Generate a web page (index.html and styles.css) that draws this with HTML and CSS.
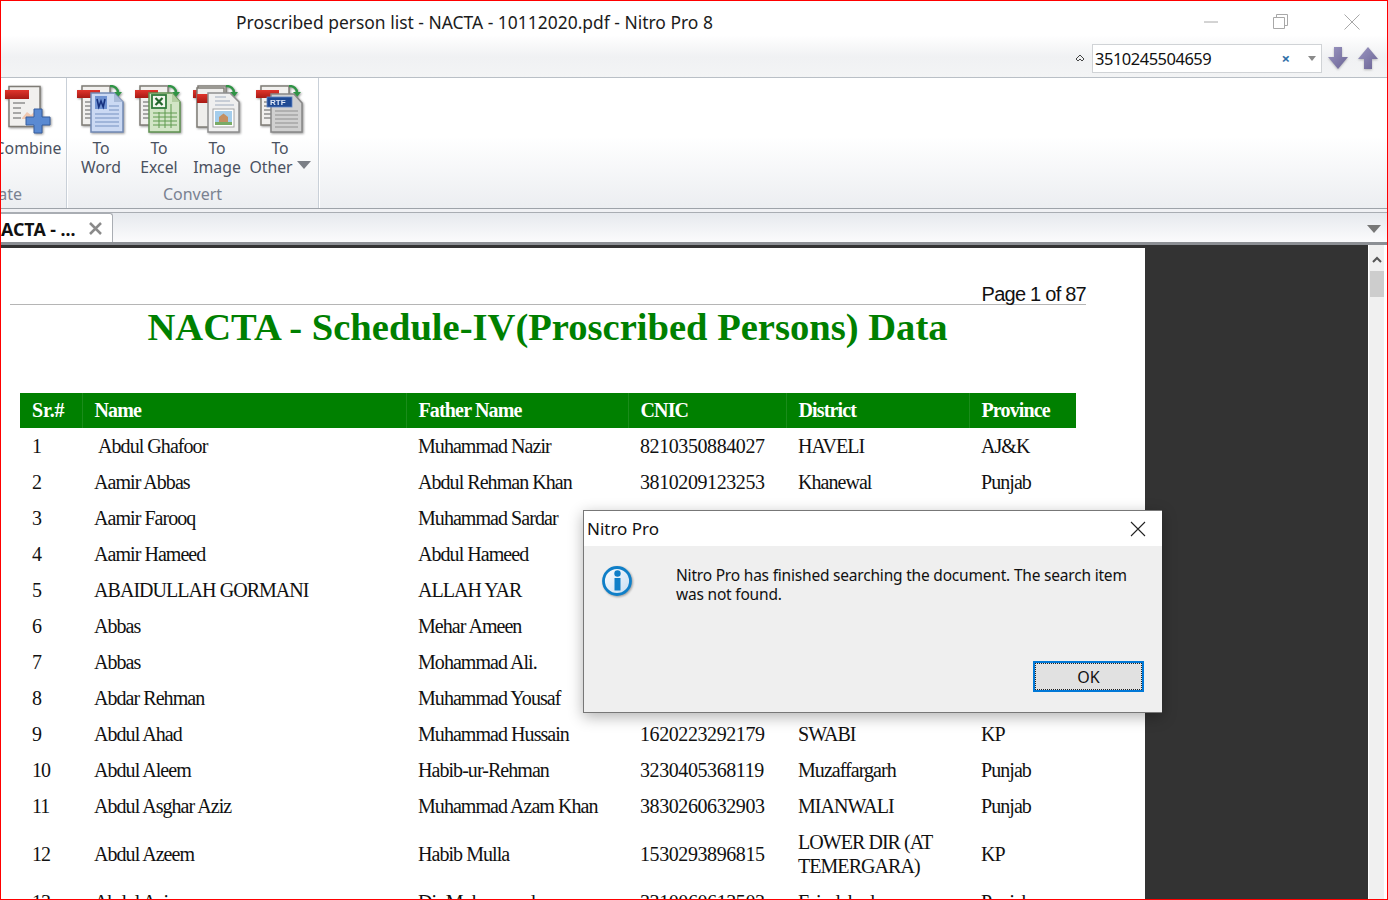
FILE: index.html
```html
<!DOCTYPE html>
<html lang="en">
<head>
    <meta charset="UTF-8">
    <meta name="viewport" content="width=device-width, initial-scale=1.0">
    <title>Proscribed person list - NACTA - 10112020.pdf - Nitro Pro 8</title>
    <link rel="stylesheet" href="styles.css">
</head>
<body>
    <svg class="defs" width="0" height="0">
        <defs>
            <linearGradient id="red-tab" x1="0" y1="0" x2="0" y2="1">
                <stop offset="0" stop-color="#e0352c"/>
                <stop offset="1" stop-color="#a81a14"/>
            </linearGradient>
            <linearGradient id="arrow-fill" x1="0" y1="0" x2="1" y2="1">
                <stop offset="0" stop-color="#9c97c2"/>
                <stop offset="1" stop-color="#6a6394"/>
            </linearGradient>
        </defs>
        <symbol id="back-page" viewBox="0 0 48 48">
            <rect x="5" y="1" width="28" height="39" fill="#f1f0ee" stroke="#7f7c76" stroke-width="1.500"/>
            <path d="M8 17h7M8 21h7M8 25h7M8 29h7M8 33h7" stroke="#8e8e8e" stroke-width="1.500"/>
            <rect x="0" y="5" width="23" height="8" fill="url(#red-tab)"/>
            <path d="M33 1c5 0 8 3 8 7" fill="none" stroke="#2f9445" stroke-width="2.500"/>
            <path d="M37 7h8l-4 5z" fill="#2f9445"/>
        </symbol>
    </svg>

    <div class="window">
        <header class="topbar">
            <div class="title-row">
                <div class="doc-title">Proscribed person list - NACTA - 10112020.pdf - Nitro Pro 8</div>
                <div class="win-controls">
                    <svg width="16" height="16" viewBox="0 0 16 16"><path d="M2 8h14" stroke="#a8a8a8" stroke-width="1"/></svg>
                    <svg width="16" height="16" viewBox="0 0 16 16"><path d="M.5 3.500h11v11H.5zM3.500 3V.5h11v11H12" fill="none" stroke="#a8a8a8"/></svg>
                    <svg width="16" height="16" viewBox="0 0 16 16"><path d="M.5.5l15 15M15.500.5l-15 15" stroke="#a8a8a8"/></svg>
                </div>
            </div>
            <div class="search-row">
                <svg class="collapse" width="10" height="8" viewBox="0 0 10 8"><path d="M1 5l4-4 4 4-2 2-2-2-2 2z" fill="none" stroke="#444" stroke-width="1"/></svg>
                <div class="search-box">
                    <span class="search-text">3510245504659</span>
                    <span class="search-clear">×</span>
                    <span class="search-drop"></span>
                </div>
                <svg class="nav-arrow" width="20" height="24" viewBox="0 0 20 24"><path d="M6 1h8v10h6l-10 12L0 11h6z" fill="url(#arrow-fill)"/></svg>
                <svg class="nav-arrow arrow-up" width="20" height="24" viewBox="0 0 20 24"><path d="M6 23h8V13h6L10 1 0 13h6z" fill="url(#arrow-fill)"/></svg>
            </div>
        </header>

        <section class="ribbon">
            <div class="group group-create">
                <div class="tools">
                    <div class="tool">
                        <svg class="tool-icon" width="48" height="48" viewBox="0 0 48 48">
                            <rect x="5" y="1.500" width="31" height="40" fill="#f1f0ee" stroke="#7f7c76" stroke-width="1.500"/>
                            <path d="M9 18h12M9 23h8M9 28h8M9 33h8" stroke="#8e8e8e" stroke-width="1.500"/>
                            <rect x="1" y="5" width="24" height="9" fill="url(#red-tab)"/>
                            <path d="M18 33l5-6 4 3 4-4v8H18z" fill="#f0c8b0"/>
                            <path d="M30 24h8v8h8v8h-8v8h-8v-8h-8v-8h8z" fill="#5a8ad2" stroke="#345c9e"/>
                        </svg>
                        <span class="tool-label">Combine</span>
                    </div>
                </div>
                <div class="group-name">Create</div>
            </div>
            <div class="group group-convert">
                <div class="tools">
                    <div class="tool">
                        <svg class="tool-icon" width="48" height="48" viewBox="0 0 48 48">
                            <use href="#back-page" width="48" height="48"/>
                            <path d="M14 8h23l9 9v30H14z" fill="#cbd9f3" stroke="#7189b5" stroke-width="1.500"/>
                            <path d="M37 8v9h9z" fill="#a9bbd9"/>
                            <path d="M32 21h10M32 25h10M18 29h24M18 33h24M18 37h24M18 41h24" stroke="#93a9d2" stroke-width="1.500"/>
                            <rect x="18" y="11" width="12" height="13" fill="#6f92d2"/>
                            <path d="M20 14l1.800 8 2.200-6 2.200 6 1.800-8" fill="none" stroke="#16317f" stroke-width="1.600"/>
                        </svg>
                        <span class="tool-label">To<br>Word</span>
                    </div>
                    <div class="tool">
                        <svg class="tool-icon" width="48" height="48" viewBox="0 0 48 48">
                            <use href="#back-page" width="48" height="48"/>
                            <path d="M14 8h23l8 9v30H14z" fill="#d2e5c6" stroke="#5f9150" stroke-width="1.500"/>
                            <path d="M37 8v9h8z" fill="#b2cda1"/>
                            <path d="M18 28h24M18 32h24M18 36h24M18 40h24M24 27v16M30 19v24M36 19v24" stroke="#5e9a4e"/>
                            <rect x="17" y="10" width="14" height="13" fill="#f2f6ee" stroke="#2f7a3a" stroke-width="1.800"/>
                            <path d="M20.500 13l7 7M27.500 13l-7 7" stroke="#22662c" stroke-width="2.200"/>
                        </svg>
                        <span class="tool-label">To<br>Excel</span>
                    </div>
                    <div class="tool">
                        <svg class="tool-icon" width="48" height="48" viewBox="0 0 48 48">
                            <use href="#back-page" width="48" height="48"/>
                            <rect x="4" y="3" width="27" height="39" fill="#efeeec" stroke="#7f7c76" stroke-width="1.500"/>
                            <rect x="4" y="9" width="12" height="9" fill="url(#red-tab)"/>
                            <path d="M15 8h22l9 9v30H15z" fill="#efefef" stroke="#8f8f8f" stroke-width="1.500"/>
                            <path d="M22 12h11M22 16h15M22 20h19" stroke="#9fabbd" stroke-width="1.200"/>
                            <rect x="20" y="24" width="21" height="18" fill="#fff" stroke="#a3a3a3"/>
                            <rect x="22" y="26" width="17" height="14" fill="#a4cdec"/>
                            <path d="M26 37v-5l4.500-3.500 4.500 3.500v5z" fill="#c48f62"/>
                            <path d="M22 37h17v3H22z" fill="#79ab66"/>
                        </svg>
                        <span class="tool-label">To<br>Image</span>
                    </div>
                    <div class="tool tool-wide">
                        <svg class="tool-icon" width="48" height="48" viewBox="0 0 48 48">
                            <use href="#back-page" width="48" height="48"/>
                            <path d="M15 9h23l8 9v29H15z" fill="#d0d0d0" stroke="#868686" stroke-width="1.500"/>
                            <path d="M19 26h23M19 30h23M19 34h23M19 38h23M19 42h23" stroke="#a5a5a5" stroke-width="1.500"/>
                            <rect x="11" y="12" width="25" height="10" fill="#1f4a94" stroke="#5f86c6" stroke-width=".8"/>
                            <text class="rtf-text" x="14" y="20">RTF</text>
                        </svg>
                        <span class="tool-label">To<br>Other<i class="caret"></i></span>
                    </div>
                </div>
                <div class="group-name">Convert</div>
            </div>
        </section>

        <nav class="tabstrip">
            <div class="tab">
                <span class="tab-name">ACTA - ...</span>
                <svg width="13" height="13" viewBox="0 0 13 13"><path d="M1 1l11 11M12 1L1 12" stroke="#8a8a8a" stroke-width="2.500"/></svg>
            </div>
            <span class="tab-menu"></span>
        </nav>

        <main class="viewer">
            <div class="page">
                <div class="page-no">Page 1 of 87</div>
                <h1 class="report-title">NACTA - Schedule-IV(Proscribed Persons) Data</h1>
                <table class="report">
                    <colgroup>
                        <col class="c-sr"><col class="c-name"><col class="c-father"><col class="c-cnic"><col class="c-district"><col class="c-province">
                    </colgroup>
                    <thead>
                        <tr><th>Sr.#</th><th>Name</th><th>Father Name</th><th>CNIC</th><th>District</th><th>Province</th></tr>
                    </thead>
                    <tbody>
                        <tr><td>1</td><td>&nbsp;Abdul Ghafoor</td><td>Muhammad Nazir</td><td class="cnic">8210350884027</td><td>HAVELI</td><td>AJ&amp;K</td></tr>
                        <tr><td>2</td><td>Aamir Abbas</td><td>Abdul Rehman Khan</td><td class="cnic">3810209123253</td><td>Khanewal</td><td>Punjab</td></tr>
                        <tr><td>3</td><td>Aamir Farooq</td><td>Muhammad Sardar</td><td></td><td></td><td></td></tr>
                        <tr><td>4</td><td>Aamir Hameed</td><td>Abdul Hameed</td><td></td><td></td><td></td></tr>
                        <tr><td>5</td><td>ABAIDULLAH GORMANI</td><td>ALLAH YAR</td><td></td><td></td><td></td></tr>
                        <tr><td>6</td><td>Abbas</td><td>Mehar Ameen</td><td></td><td></td><td></td></tr>
                        <tr><td>7</td><td>Abbas</td><td>Mohammad Ali.</td><td></td><td></td><td></td></tr>
                        <tr><td>8</td><td>Abdar Rehman</td><td>Muhammad Yousaf</td><td></td><td></td><td></td></tr>
                        <tr><td>9</td><td>Abdul Ahad</td><td>Muhammad Hussain</td><td class="cnic">1620223292179</td><td>SWABI</td><td>KP</td></tr>
                        <tr><td>10</td><td>Abdul Aleem</td><td>Habib-ur-Rehman</td><td class="cnic">3230405368119</td><td>Muzaffargarh</td><td>Punjab</td></tr>
                        <tr><td>11</td><td>Abdul Asghar Aziz</td><td>Muhammad Azam Khan</td><td class="cnic">3830260632903</td><td>MIANWALI</td><td>Punjab</td></tr>
                        <tr class="tall"><td>12</td><td>Abdul Azeem</td><td>Habib Mulla</td><td class="cnic">1530293896815</td><td>LOWER DIR (AT TEMERGARA)</td><td>KP</td></tr>
                        <tr><td>13</td><td>Abdul Aziz</td><td>Dir Muhammad</td><td class="cnic">3310060613503</td><td>Faisalabad</td><td>Punjab</td></tr>
                    </tbody>
                </table>
            </div>
            <aside class="scrollbar">
                <svg width="10" height="7" viewBox="0 0 10 7"><path d="M1 6l4-4 4 4" fill="none" stroke="#555" stroke-width="2"/></svg>
                <div class="scroll-thumb"></div>
            </aside>
        </main>

        <div class="dialog">
            <div class="dialog-head">
                <span>Nitro Pro</span>
                <svg width="16" height="16" viewBox="0 0 16 16"><path d="M1 1l14 14M15 1L1 15" stroke="#222" stroke-width="1.100"/></svg>
            </div>
            <div class="dialog-body">
                <div class="dialog-msg">
                    <svg class="info-icon" width="32" height="32" viewBox="0 0 32 32">
                        <defs>
                            <linearGradient id="info-bg" x1="0" y1="0" x2="1" y2="1">
                                <stop offset="0" stop-color="#ffffff"/>
                                <stop offset="1" stop-color="#c4dcf1"/>
                            </linearGradient>
                        </defs>
                        <circle cx="16" cy="16" r="13.500" fill="url(#info-bg)" stroke="#0f7fc8" stroke-width="2.800"/>
                        <circle cx="16.500" cy="8.500" r="3.200" fill="#0f7fc8"/>
                        <path d="M13.500 13h6v12.500h-6z" fill="#0f7fc8"/>
                    </svg>
                    <p class="dialog-text">Nitro Pro has finished searching the document. The search item was not found.</p>
                </div>
                <div class="dialog-actions">
                    <button class="ok-btn"><span class="ok-inner">OK</span></button>
                </div>
            </div>
        </div>
    </div>
</body>
</html>
```

FILE: styles.css
```css
html, body {
    margin: 0;
    padding: 0;
    overflow: hidden;
}
body {
    font-family: "Noto Sans", Arial, sans-serif;
    color: #222;
}
.defs {
    position: absolute;
}
.window {
    position: relative;
    height: 900px;
    box-sizing: border-box;
    border: 1px solid #f00;
    overflow: hidden;
    display: flex;
    flex-direction: column;
    background: #fff;
}

/* title bar + search */
.topbar {
    height: 77px;
    flex: none;
    box-sizing: border-box;
    border-bottom: 1px solid #b9bfc6;
    background: linear-gradient(#fff 34px, #f0f1f3 56px, #f3f4f5 76px);
}
.title-row {
    display: flex;
    justify-content: space-between;
    height: 42px;
}
.doc-title {
    padding: 9px 0 0 235px;
    font-size: 17.45px;
    line-height: 24px;
    color: #1c1c1c;
}
.win-controls {
    display: flex;
    gap: 55px;
    padding: 13px 27px 0 0;
}
.win-controls svg {
    flex: none;
}
.search-row {
    display: flex;
    align-items: center;
    justify-content: flex-end;
    padding-right: 9px;
    height: 30px;
}
.collapse {
    margin-right: 7px;
}
.search-box {
    width: 230px;
    height: 29px;
    box-sizing: border-box;
    border: 1px solid #d0d3d6;
    background: #fff;
    display: flex;
    align-items: center;
    padding: 0 5px 0 2px;
    margin-right: 6px;
}
.search-text {
    flex: 1;
    font-size: 16.5px;
    letter-spacing: -.5px;
    color: #111;
}
.search-clear {
    color: #2f6ea8;
    font-size: 15px;
    font-weight: bold;
    margin-right: 18px;
}
.search-drop {
    width: 0;
    height: 0;
    border-left: 4px solid transparent;
    border-right: 4px solid transparent;
    border-top: 5px solid #8a8a8a;
}
.nav-arrow {
    filter: drop-shadow(0 1px 1px rgba(0, 0, 0, .25));
}
.arrow-up {
    margin-left: 10px;
}

/* ribbon */
.ribbon {
    height: 130px;
    flex: none;
    display: flex;
    background: linear-gradient(#fff 45%, #eceef1);
}
.group {
    display: flex;
    flex-direction: column;
    box-sizing: border-box;
    border-right: 1px solid #c9d0d8;
    box-shadow: 1px 0 0 #fff;
    padding-top: 7px;
}
.group-create {
    width: 66px;
    align-items: flex-end;
    overflow: hidden;
}
.group-convert {
    width: 252px;
    padding-left: 5px;
}
.tools {
    display: flex;
    height: 99px;
}
.tool {
    width: 58px;
    display: flex;
    flex-direction: column;
    align-items: center;
}
.group-create .tool {
    width: 70px;
    margin-right: 3px;
}
.tool-wide {
    width: 68px;
}
.tool-icon {
    flex: none;
    overflow: visible;
    filter: blur(.45px) drop-shadow(1px 1px 1px rgba(0, 0, 0, .4));
}
.rtf-text {
    font-family: "Liberation Sans", sans-serif;
    font-size: 8px;
    font-weight: bold;
    fill: #dfe8f7;
}
.tool-label {
    margin-top: 6px;
    font-size: 15.8px;
    line-height: 19px;
    text-align: center;
    color: #4a5160;
    white-space: nowrap;
}
.caret {
    display: inline-block;
    margin-left: 4px;
    vertical-align: 4px;
    border-left: 7px solid transparent;
    border-right: 7px solid transparent;
    border-top: 8px solid #7b7f86;
}
.group-name {
    font-size: 16px;
    line-height: 20px;
    text-align: center;
    color: #7a8291;
    padding-right: 5px;
}
.group-create .group-name {
    padding-right: 44px;
}

/* tab strip */
.tabstrip {
    height: 37px;
    flex: none;
    box-sizing: border-box;
    border-top: 1px solid #9ea3a9;
    display: flex;
    justify-content: space-between;
    align-items: flex-end;
    background:
        linear-gradient(#f0f1f4 3px, #a9adb3 3px, #a9adb3 4px, #e6e9ee 4px, #fbfbfc 33px);
    border-bottom: 3px solid #8c8f94;
}
.tab {
    width: 112px;
    height: 29px;
    box-sizing: border-box;
    background: #fff;
    border: 1px solid #a9adb3;
    border-left: none;
    border-bottom: none;
    border-radius: 0 3px 0 0;
    display: flex;
    align-items: center;
    gap: 13px;
    padding-top: 1px;
}
.tab-name {
    font-size: 17.8px;
    font-weight: bold;
    color: #111;
    white-space: nowrap;
}
.tab-menu {
    margin: 0 6px 9px 0;
    border-left: 7px solid transparent;
    border-right: 7px solid transparent;
    border-top: 8px solid #777;
}

/* document view */
.viewer {
    flex: 1;
    min-height: 0;
    display: flex;
    justify-content: space-between;
    background: #333;
    padding-top: 3px;
    overflow: hidden;
}
.page {
    width: 1144px;
    flex: none;
    background: #fff;
    font-family: "Liberation Serif", "Times New Roman", serif;
    color: #111;
    letter-spacing: -.95px;
    font-size: 20px;
}
.page-no {
    margin: 34px 0 0 9px;
    width: 1076px;
    height: 23px;
    box-sizing: border-box;
    border-bottom: 1px solid #b5b5b5;
    text-align: right;
    font-family: "Liberation Sans", Arial, sans-serif;
    font-size: 20px;
    letter-spacing: -.75px;
    line-height: 25px;
}
.report-title {
    width: 1093px;
    margin: 0;
    text-align: center;
    color: #008000;
    font-size: 38.6px;
    line-height: 44px;
    letter-spacing: 0;
    font-weight: bold;
}
.report {
    margin: 44px 0 0 19px;
    width: 1056px;
    table-layout: fixed;
    border-collapse: collapse;
}
.c-sr { width: 62px; }
.c-name { width: 324px; }
.c-father { width: 222px; }
.c-cnic { width: 158px; }
.c-district { width: 183px; }
.c-province { width: 107px; }
.report th {
    height: 35px;
    padding: 0 0 0 12px;
    background: #008000;
    color: #fff;
    text-align: left;
    font-weight: bold;
    letter-spacing: -.85px;
}
.report th:first-child {
    letter-spacing: -.2px;
}
.report th + th {
    border-left: 1px solid #1a8c1a;
}
.report td {
    height: 36px;
    padding: 0 0 0 12px;
    line-height: 24px;
    overflow: hidden;
}
.report td.cnic {
    letter-spacing: -.42px;
}
.report tr.tall td {
    height: 60px;
}
.scrollbar {
    width: 15px;
    flex: none;
    margin-right: 3px;
    margin-top: -3px;
    background: #f0f0f0;
    border-left: 1px solid #fff;
    box-shadow: 3px 0 0 #fff;
    display: flex;
    flex-direction: column;
    align-items: center;
    padding-top: 11px;
}
.scroll-thumb {
    width: 14px;
    height: 26px;
    margin-top: 8px;
    background: #cdcdcd;
}

/* message box */
.dialog {
    position: absolute;
    left: 582px;
    top: 509px;
    width: 579px;
    height: 203px;
    box-sizing: border-box;
    border: 1px solid #777;
    border-right: none;
    background: #efefef;
    box-shadow: 0 4px 14px rgba(0, 0, 0, .3);
    display: flex;
    flex-direction: column;
    font-size: 16px;
    color: #111;
}
.dialog-head {
    height: 35px;
    flex: none;
    background: #fff;
    display: flex;
    justify-content: space-between;
    align-items: center;
    padding: 0 16px 0 3px;
    font-size: 17px;
}
.dialog-body {
    flex: 1;
    display: flex;
    flex-direction: column;
    justify-content: space-between;
    padding: 19px 18px 20px 17px;
}
.dialog-msg {
    display: flex;
}
.info-icon {
    flex: none;
    filter: drop-shadow(1px 1px 1px rgba(0, 0, 0, .35));
}
.dialog-text {
    margin: 1px 0 0 43px;
    line-height: 19px;
    width: 470px;
    font-size: 15.5px;
    letter-spacing: -.2px;
}
.dialog-actions {
    display: flex;
    justify-content: flex-end;
}
.ok-btn {
    width: 111px;
    height: 31px;
    padding: 0;
    box-sizing: border-box;
    border: 2px solid #0078d7;
    background: #e1e1e1;
    font-family: inherit;
    font-size: 16px;
    color: #111;
    display: flex;
}
.ok-inner {
    flex: 1;
    border: 1px dotted #222;
    line-height: 26px;
}
```
